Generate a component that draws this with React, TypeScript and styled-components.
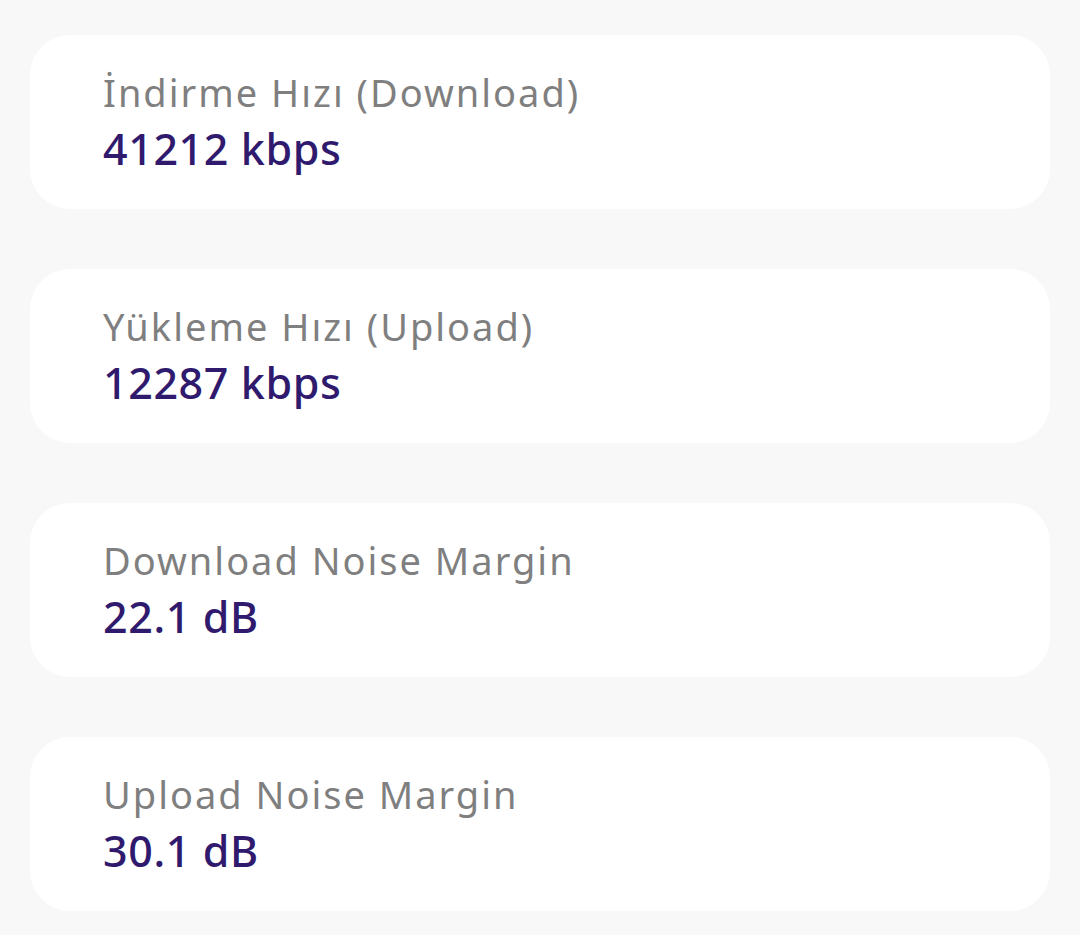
import React from "react";
import styled, { createGlobalStyle } from "styled-components";

const Global = createGlobalStyle`
  html, body { margin: 0; padding: 0; background: #f8f8f8; }
  body { font-family: "Noto Sans", "Lato", sans-serif; }
`;

const Page = styled.div`
  width: 1080px;
  height: 935px;
  box-sizing: border-box;
  padding: 35px 30px 0 30px;
  display: flex;
  flex-direction: column;
  gap: 60px;
  background: #f8f8f8;
`;

const Card = styled.div`
  height: 174px;
  box-sizing: border-box;
  background: #ffffff;
  border-radius: 40px;
  padding: 0 73px 2px;
  display: flex;
  flex-direction: column;
  justify-content: center;
`;

const Label = styled.div`
  font-size: 38px;
  line-height: 56px;
  color: #7f7f7f;
  font-weight: 400;
  letter-spacing: 2px;
`;

const Value = styled.div`
  font-size: 43px;
  line-height: 58px;
  color: #2f1a6e;
  font-weight: 500;
  letter-spacing: 0.6px;
`;

const items = [
  { label: "İndirme Hızı (Download)", value: "41212 kbps" },
  { label: "Yükleme Hızı (Upload)", value: "12287 kbps" },
  { label: "Download Noise Margin", value: "22.1 dB" },
  { label: "Upload Noise Margin", value: "30.1 dB" },
];

export default function App() {
  return (
    <>
      <Global />
      <Page>
        {items.map((it) => (
          <Card key={it.label}>
            <Label>{it.label}</Label>
            <Value>{it.value}</Value>
          </Card>
        ))}
      </Page>
    </>
  );
}
